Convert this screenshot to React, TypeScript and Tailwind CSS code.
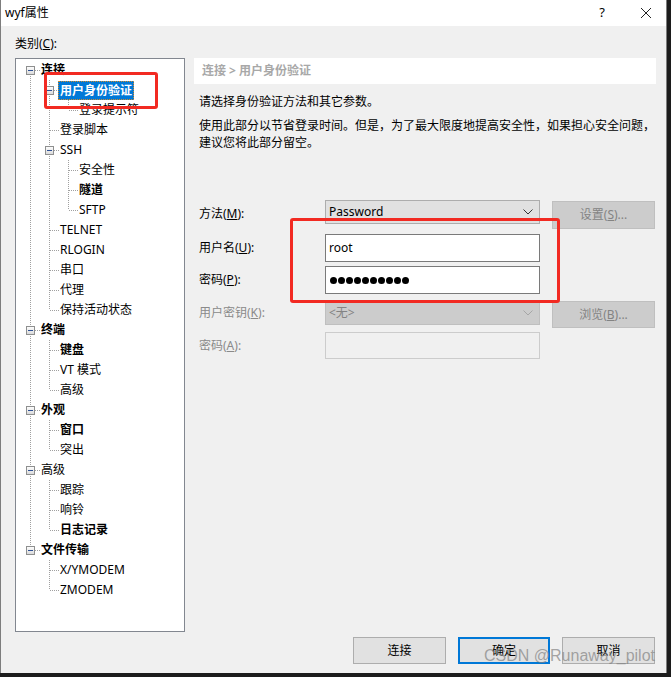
import React from "react";

type Node = { t: string; l: number; bold?: boolean; box?: boolean; sel?: boolean };

const nodes: Node[] = [
  { t: "连接", l: 0, bold: true, box: true },
  { t: "用户身份验证", l: 1, bold: true, box: true, sel: true },
  { t: "登录提示符", l: 2 },
  { t: "登录脚本", l: 1 },
  { t: "SSH", l: 1, box: true },
  { t: "安全性", l: 2 },
  { t: "隧道", l: 2, bold: true },
  { t: "SFTP", l: 2 },
  { t: "TELNET", l: 1 },
  { t: "RLOGIN", l: 1 },
  { t: "串口", l: 1 },
  { t: "代理", l: 1 },
  { t: "保持活动状态", l: 1 },
  { t: "终端", l: 0, bold: true, box: true },
  { t: "键盘", l: 1, bold: true },
  { t: "VT 模式", l: 1 },
  { t: "高级", l: 1 },
  { t: "外观", l: 0, bold: true, box: true },
  { t: "窗口", l: 1, bold: true },
  { t: "突出", l: 1 },
  { t: "高级", l: 0, box: true },
  { t: "跟踪", l: 1 },
  { t: "响铃", l: 1 },
  { t: "日志记录", l: 1, bold: true },
  { t: "文件传输", l: 0, bold: true, box: true },
  { t: "X/YMODEM", l: 1 },
  { t: "ZMODEM", l: 1 },
];

function hasNext(i: number): boolean {
  const l = nodes[i].l;
  for (let j = i + 1; j < nodes.length; j++) {
    if (nodes[j].l < l) return false;
    if (nodes[j].l === l) return true;
  }
  return false;
}

function ancestorAt(i: number, level: number): number {
  for (let j = i - 1; j >= 0; j--) {
    if (nodes[j].l === level) return j;
  }
  return -1;
}

const DOT = "#a0a0a0";

function Cell({ top, bottom, horiz, box, full }: { top?: boolean; bottom?: boolean; horiz?: boolean; box?: boolean; full?: boolean }) {
  return (
    <svg width="19" height="20" className="shrink-0 block">
      {full && <line x1="9.5" y1="0" x2="9.5" y2="20" stroke={DOT} strokeDasharray="1 1" />}
      {top && <line x1="9.5" y1="0" x2="9.5" y2="10" stroke={DOT} strokeDasharray="1 1" />}
      {bottom && <line x1="9.5" y1="10" x2="9.5" y2="20" stroke={DOT} strokeDasharray="1 1" />}
      {horiz && <line x1="10" y1="10.5" x2="19" y2="10.5" stroke={DOT} strokeDasharray="1 1" />}
      {box && (
        <g>
          <defs>
            <linearGradient id="bx" x1="0" y1="0" x2="0" y2="1">
              <stop offset="0" stopColor="#ffffff" />
              <stop offset="1" stopColor="#d8d8d8" />
            </linearGradient>
          </defs>
          <rect x="5.5" y="6.5" width="8" height="8" fill="url(#bx)" stroke="#8e8f8f" />
          <line x1="7" y1="10.5" x2="12" y2="10.5" stroke="#2c4f94" />
        </g>
      )}
    </svg>
  );
}

function Tree() {
  return (
    <div className="relative w-[170px] h-[574px] border border-[#828790] bg-white pl-[5px] pt-[1px] overflow-hidden">
      {nodes.map((n, i) => {
        const cells: React.ReactNode[] = [];
        for (let c = 0; c < n.l; c++) {
          const a = ancestorAt(i, c);
          cells.push(<Cell key={c} full={a >= 0 && hasNext(a)} />);
        }
        cells.push(
          <Cell key="own" top={i > 0} bottom={hasNext(i)} horiz box={n.box} />
        );
        return (
          <div key={i} className="flex h-[20px] items-center">
            {cells}
            {n.sel ? (
              <span className="ml-[-1px] px-[1px] h-[19px] leading-[17px] bg-[#0078d7] text-white border border-dotted border-[#d08a2a] font-bold text-[12px] whitespace-nowrap">
                {n.t}
              </span>
            ) : (
              <span className={`ml-[1px] text-[12px] leading-[20px] whitespace-nowrap text-black ${n.bold ? "font-bold" : ""}`}>{n.t}</span>
            )}
          </div>
        );
      })}
      <div className="absolute left-[28px] top-[13px] w-[114px] h-[37px] border-[3px] border-[#f22a22] rounded-[3px]" />
    </div>
  );
}

function Chevron({ color }: { color: string }) {
  return (
    <svg width="10" height="6" className="block">
      <polyline points="0.5,0.5 5,5 9.5,0.5" fill="none" stroke={color} strokeWidth="1" />
    </svg>
  );
}

function Select({ value, disabled }: { value: string; disabled?: boolean }) {
  return (
    <div
      className={`w-[215px] h-[24px] flex items-center justify-between pl-[3px] pr-[6px] border text-[12px] ${
        disabled ? "bg-[#cccccc] border-[#bfbfbf] text-[#838383]" : "bg-[#e1e1e1] border-[#adadad] text-black"
      }`}
    >
      <span>{value}</span>
      <Chevron color={disabled ? "#a6a6a6" : "#333333"} />
    </div>
  );
}

function DisabledButton({ children, h }: { children: React.ReactNode; h: string }) {
  return (
    <div className={`ml-[12px] w-[103px] ${h} flex items-center justify-center bg-[#cccccc] border border-[#bfbfbf] text-[#838383] text-[12px]`}>
      {children}
    </div>
  );
}

export default function App() {
  return (
    <div className="w-[671px] h-[677px] bg-[#1c1c1c] font-['Noto_Sans','Noto_Sans_CJK_SC',sans-serif]">
      <div className="w-[667px] h-[673px] flex flex-col border-l border-r border-[#7d7d7d]">
        {/* Title bar */}
        <div className="h-[26px] bg-white flex items-center pl-[4px] shrink-0">
          <span className="text-[12px] text-black">wyf属性</span>
          <div className="flex-1" />
          <span className="text-[13px] text-black mr-[36px]">?</span>
          <svg width="10" height="10" className="mr-[15px] block">
            <line x1="0" y1="0" x2="10" y2="10" stroke="#222" strokeWidth="1" />
            <line x1="10" y1="0" x2="0" y2="10" stroke="#222" strokeWidth="1" />
          </svg>
        </div>
        {/* Body */}
        <div className="relative flex-1 bg-[#f0f0f0] pl-[14px] flex flex-col">
          <div className="mt-[10px] h-[16px] leading-[16px] text-[12px] text-black">
            类别(<span className="underline">C</span>):
          </div>
          <div className="mt-[6px] flex">
            <Tree />
            <div className="ml-[9px] w-[462px] relative">
              <div className="h-[26px] bg-white pl-[8px] flex items-center text-[12px] font-bold text-[#a8a8a8]">
                连接 &gt; 用户身份验证
              </div>
              <div className="mt-[10px] pl-[5px] leading-[16px] text-[12px] text-black whitespace-nowrap">
                请选择身份验证方法和其它参数。
              </div>
              <div className="mt-[7px] pl-[5px] leading-[17px] text-[12px] text-black whitespace-nowrap">
                使用此部分以节省登录时间。但是，为了最大限度地提高安全性，如果担心安全问题，
                <br />
                建议您将此部分留空。
              </div>
              {/* Form */}
              <div className="mt-[49px] pl-[5px] text-[12px]">
                <div className="flex items-start">
                  <div className="w-[126px] h-[28px] flex items-center text-black">
                    方法(<span className="underline">M</span>):
                  </div>
                  <Select value="Password" />
                  <div className="mt-[1px]">
                    <DisabledButton h="h-[28px]">
                      设置(<span className="underline">S</span>)...
                    </DisabledButton>
                  </div>
                </div>
                <div className="flex items-start mt-[5px]">
                  <div className="w-[126px] h-[28px] flex items-center text-black">
                    用户名(<span className="underline">U</span>):
                  </div>
                  <div className="w-[215px] h-[28px] bg-white border border-[#7a7a7a] flex items-center pl-[3px] text-black">
                    root
                  </div>
                </div>
                <div className="flex items-start mt-[4px]">
                  <div className="w-[126px] h-[28px] flex items-center text-black">
                    密码(<span className="underline">P</span>):
                  </div>
                  <div className="w-[215px] h-[28px] bg-white border border-[#7a7a7a] flex items-center pl-[4px] gap-[1px]">
                    {Array.from({ length: 10 }).map((_, k) => (
                      <span key={k} className="w-[7px] h-[7px] rounded-full bg-black" />
                    ))}
                  </div>
                </div>
                <div className="flex items-start mt-[7px]">
                  <div className="w-[126px] h-[24px] flex items-center text-[#8a8a8a]">
                    用户密钥(<span className="underline">K</span>):
                  </div>
                  <Select value="<无>" disabled />
                  <DisabledButton h="h-[27px]">
                    浏览(<span className="underline">B</span>)...
                  </DisabledButton>
                </div>
                <div className="flex items-start mt-[4px]">
                  <div className="w-[126px] h-[27px] flex items-center text-[#8a8a8a]">
                    密码(<span className="underline">A</span>):
                  </div>
                  <div className="w-[215px] h-[27px] bg-[#f0f0f0] border border-[#cccccc]" />
                </div>
              </div>
              <div className="absolute left-[96px] top-[160px] w-[270px] h-[85px] border-[3px] border-[#f22a22] rounded-[3px]" />
            </div>
          </div>
          {/* Buttons */}
          <div className="mt-[5px] flex justify-end pr-[11px] gap-[12px] text-[12px] text-black">
            <div className="w-[93px] h-[27px] bg-[#e1e1e1] border border-[#adadad] flex items-center justify-center">连接</div>
            <div className="w-[92px] h-[27px] bg-[#e1e1e1] border-2 border-[#0078d7] flex items-center justify-center">确定</div>
            <div className="w-[93px] h-[27px] bg-[#e1e1e1] border border-[#adadad] flex items-center justify-center">取消</div>
          </div>
          <div className="absolute right-[11px] bottom-[8px] text-[16px] leading-[18px] font-['Liberation_Sans',sans-serif] text-[rgba(130,130,130,0.7)] whitespace-nowrap">
            CSDN @Runaway_pilot
          </div>
        </div>
      </div>
    </div>
  );
}
